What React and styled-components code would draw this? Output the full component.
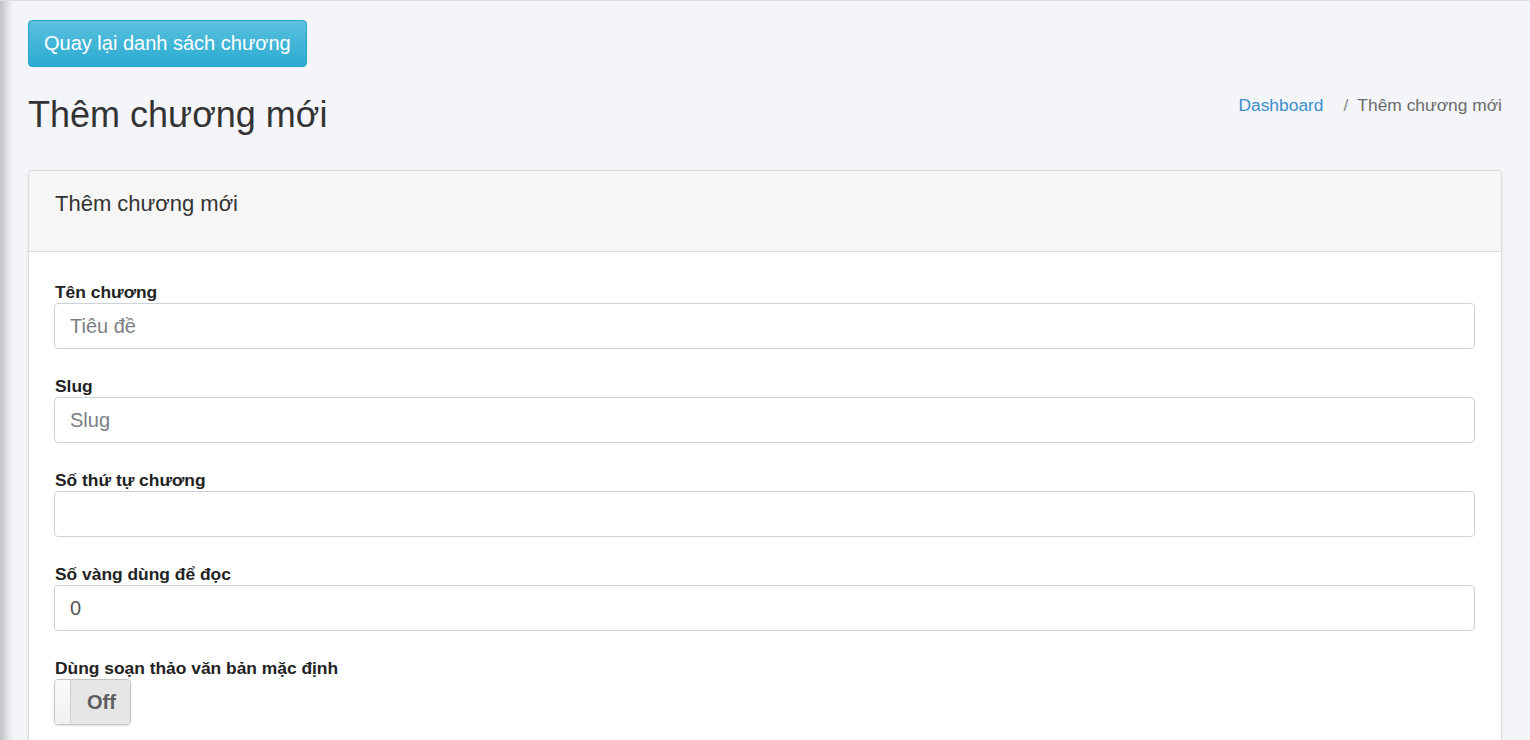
import React from 'react';
import styled, { createGlobalStyle } from 'styled-components';

const GlobalStyle = createGlobalStyle`
  html, body {
    margin: 0;
    padding: 0;
    background: #f4f5f9;
    font-family: "Liberation Sans", Arial, sans-serif;
    color: #333;
  }
  * { box-sizing: border-box; }
`;

const Page = styled.div`
  min-height: 740px;
  padding: 20px 28px 0 28px;
  border-top: 1px solid #dcdee3;
  box-shadow: inset 14px 0 10px -8px rgba(0, 0, 0, 0.22);
  overflow: hidden;
`;

const BackButton = styled.button`
  display: inline-block;
  height: 47px;
  padding: 0 15px;
  margin-top: -1px;
  font-family: inherit;
  font-size: 20px;
  color: #fff;
  background: linear-gradient(to bottom, #5bc0de 0%, #2aabd2 100%);
  border: 1px solid #28a4c9;
  border-radius: 4px;
  cursor: pointer;
`;

const HeaderRow = styled.div`
  display: flex;
  justify-content: space-between;
  align-items: flex-start;
  margin-top: 28px;
  margin-bottom: 35px;
`;

const Title = styled.h1`
  margin: 0;
  font-size: 36px;
  font-weight: 400;
  line-height: 40px;
  color: #333;
`;

const Breadcrumb = styled.nav`
  display: flex;
  align-items: center;
  margin-top: -2px;
  font-size: 17.4px;
  line-height: 24px;
`;

const Crumb = styled.span`
  color: ${(p) => (p.$active ? '#6b6b6b' : '#3a8fcc')};
`;

const Separator = styled.span`
  padding: 0 9px 0 20px;
  color: #888;
`;

const Card = styled.div`
  background: #fff;
  border: 1px solid #dcdcdc;
  border-radius: 4px;
  box-shadow: 0 1px 3px rgba(0, 0, 0, 0.08);
`;

const CardHeader = styled.div`
  background: #f6f6f6;
  border-bottom: 1px solid #dcdcdc;
  border-radius: 4px 4px 0 0;
  padding: 18px 26px 32px;
  font-size: 22px;
  line-height: 30px;
  color: #333;
`;

const CardBody = styled.div`
  padding: 29px 26px 20px 25px;
`;

const FormGroup = styled.div`
  margin-bottom: 26px;
`;

const Label = styled.label`
  display: block;
  font-size: 17.4px;
  font-weight: 700;
  line-height: 22px;
  color: #222;
  padding-left: 1px;
`;

const Input = styled.input`
  display: block;
  width: 100%;
  height: 46px;
  padding: 0 15px;
  font-family: inherit;
  font-size: 20px;
  color: #555;
  background: #fff;
  border: 1px solid #cdd2d8;
  border-radius: 4px;
  outline: none;
  &::placeholder {
    color: #7b7f85;
  }
`;

const Toggle = styled.div`
  display: flex;
  width: 77px;
  height: 46px;
  border: 1px solid #c4c4c4;
  border-radius: 4px;
  overflow: hidden;
  box-shadow: 0 1px 2px rgba(0, 0, 0, 0.12);
`;

const Handle = styled.span`
  width: 16px;
  background: linear-gradient(to bottom, #fafafa, #f0f0f0);
  border-right: 1px solid #cfcfcf;
`;

const ToggleText = styled.span`
  flex: 1;
  display: flex;
  align-items: center;
  justify-content: center;
  background: #e6e6e6;
  font-size: 20px;
  font-weight: 700;
  color: #5e5e5e;
  padding-left: 2px;
`;

export default function App() {
  return (
    <>
      <GlobalStyle />
      <Page>
        <BackButton>Quay lại danh sách chương</BackButton>
        <HeaderRow>
          <Title>Thêm chương mới</Title>
          <Breadcrumb>
            <Crumb>Dashboard</Crumb>
            <Separator>/</Separator>
            <Crumb $active>Thêm chương mới</Crumb>
          </Breadcrumb>
        </HeaderRow>
        <Card>
          <CardHeader>Thêm chương mới</CardHeader>
          <CardBody>
            <FormGroup>
              <Label>Tên chương</Label>
              <Input placeholder="Tiêu đề" />
            </FormGroup>
            <FormGroup>
              <Label>Slug</Label>
              <Input placeholder="Slug" />
            </FormGroup>
            <FormGroup>
              <Label>Số thứ tự chương</Label>
              <Input />
            </FormGroup>
            <FormGroup>
              <Label>Số vàng dùng để đọc</Label>
              <Input defaultValue="0" />
            </FormGroup>
            <FormGroup>
              <Label>Dùng soạn thảo văn bản mặc định</Label>
              <Toggle>
                <Handle />
                <ToggleText>Off</ToggleText>
              </Toggle>
            </FormGroup>
          </CardBody>
        </Card>
      </Page>
    </>
  );
}
